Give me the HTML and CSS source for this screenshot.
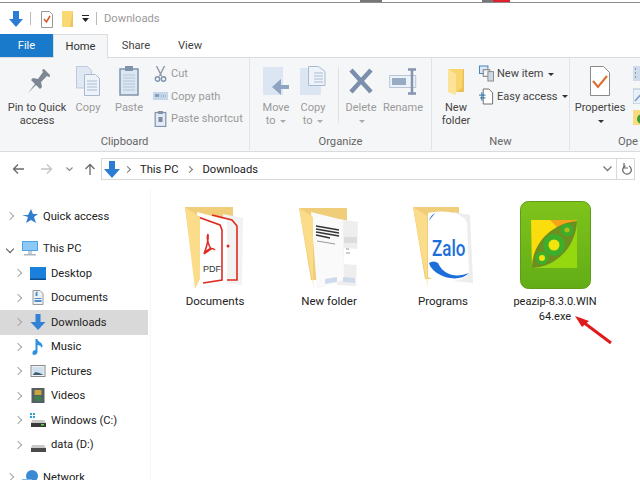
FILE: index.html
```html
<!DOCTYPE html>
<html lang="en">
<head>
    <meta charset="UTF-8">
    <title>Downloads</title>
    <link rel="stylesheet" href="styles.css">
</head>
<body>
    <div class="window">
        <!-- what is left of the window behind this one -->
        <div class="strip">
            <span class="strip-dark"></span>
            <span class="strip-gray"></span>
            <span class="strip-red"></span>
        </div>

        <!-- title bar -->
        <div class="titlebar">
            <svg width="16" height="18" viewBox="0 0 16 18"><path d="M5 1h6v8h4l-7 8-7-8h4z" fill="#2b7cd3"/></svg>
            <span class="qa-sep"></span>
            <svg class="qa-doc" width="12" height="18" viewBox="0 0 12 18"><path d="M.5 1.500h8l3 3v13H.5z" fill="#fff" stroke="#999"/><path d="M3 9l2.500 3L9 6" fill="none" stroke="#d8562a" stroke-width="1.500"/></svg>
            <svg class="qa-folder" width="12" height="18" viewBox="0 0 12 18"><path d="M0 1h11v16H0z" fill="#fad873"/><path d="M11 1v16H8z" fill="#eec45c"/></svg>
            <svg class="qa-drop" width="7" height="7" viewBox="0 0 7 7"><path d="M0 0h7v1H0zM0 3h7L3.500 7z" fill="#222"/></svg>
            <span class="qa-sep qa-sep2"></span>
            <span class="title-text">Downloads</span>
        </div>

        <!-- tabs -->
        <div class="tabs">
            <div class="tab tab-file">File</div>
            <div class="tab tab-home">Home</div>
            <div class="tab">Share</div>
            <div class="tab">View</div>
        </div>

        <!-- ribbon -->
        <div class="ribbon">
            <div class="group group-clipboard">
                <div class="group-body">
                    <div class="big-btn btn-pin">
                        <svg width="26" height="30" viewBox="0 0 26 30"><path d="M4 27l7-9-4-4 2-2 5 1 5-7-1-2 2-1 7 7-2 1-2-1-6 6 1 5-2 2-4-4z" fill="#7d8794"/></svg>
                        <span>Pin to Quick<br>access</span>
                    </div>
                    <div class="big-btn btn-copy off">
                        <svg width="24" height="30" viewBox="0 0 24 30"><path d="M.5.500h11l4 4V22H.5z" fill="#dfe8f3" stroke="#bccbdc"/><path d="M8.500 8.500h11l4 4v17h-15z" fill="#eef3f9" stroke="#a9bad0"/><path d="M11 15h10M11 18h10M11 21h10M11 24h10" stroke="#a9bad0"/></svg>
                        <span>Copy</span>
                    </div>
                    <div class="big-btn btn-paste off">
                        <svg width="20" height="30" viewBox="0 0 20 30"><rect x="1" y="3" width="18" height="26" fill="#dbe6f2" stroke="#7f93ab" stroke-width="1.500"/><rect x="6" y="0" width="8" height="5" fill="#7f93ab"/><path d="M4 9h12M4 12h12M4 15h12M4 18h12M4 21h12M4 24h12" stroke="#b4c5d8"/></svg>
                        <span>Paste</span>
                    </div>
                    <div class="small-col off">
                        <div class="small-btn">
                            <svg width="12" height="16" viewBox="0 0 12 16"><path d="M2 0l5 10M10 0L5 10" stroke="#8d98a7" stroke-width="1.400"/><circle cx="3" cy="13" r="2.200" fill="none" stroke="#7f93ab" stroke-width="1.400"/><circle cx="9" cy="13" r="2.200" fill="none" stroke="#7f93ab" stroke-width="1.400"/></svg>
                            <span>Cut</span>
                        </div>
                        <div class="small-btn">
                            <svg width="15" height="10" viewBox="0 0 15 10"><rect width="15" height="8" y="1" fill="#c6d6ea"/><path d="M2 3l1 3 1-3 1 3 1-3M8 5h1M10 5h1M12 5h1" stroke="#6e88a8" fill="none" stroke-width=".8"/></svg>
                            <span>Copy path</span>
                        </div>
                        <div class="small-btn">
                            <svg width="12" height="16" viewBox="0 0 12 16"><rect x=".7" y="1.500" width="10.600" height="14" fill="#e2ebf5" stroke="#7f93ab" stroke-width="1.200"/><rect x="3.500" width="5" height="3" fill="#7f93ab"/><path d="M4 6h4v5H4z" fill="#7f8b99"/></svg>
                            <span>Paste shortcut</span>
                        </div>
                    </div>
                </div>
                <div class="group-label">Clipboard</div>
            </div>

            <div class="group group-organize">
                <div class="group-body">
                    <div class="big-btn btn-move off">
                        <svg width="26" height="30" viewBox="0 0 26 30"><path d="M0 1h20v28H0z" fill="#dce6f2"/><path d="M26 19h-8v-6l-9 8 9 8v-6h8z" fill="#8fa4c0"/></svg>
                        <span>Move<br>to <i class="caret caret-off"></i></span>
                    </div>
                    <div class="big-btn btn-copyto off">
                        <svg width="26" height="30" viewBox="0 0 26 30"><path d="M0 2h21v27H0z" fill="#dce6f2"/><path d="M8.500.500h10l6.500 5v14H8.500z" fill="#eef3f9" stroke="#a9bad0"/><path d="M14 7h9M14 10h9M14 13h9M14 16h9" stroke="#a9bad0"/></svg>
                        <span>Copy<br>to <i class="caret caret-off"></i></span>
                    </div>
                    <span class="vline"></span>
                    <div class="big-btn btn-delete off">
                        <svg width="24" height="30" viewBox="0 0 24 30"><path d="M2 4l20 22M22 4L2 26" stroke="#7b8fac" stroke-width="4.500"/></svg>
                        <span>Delete<br><i class="caret caret-off"></i></span>
                    </div>
                    <div class="big-btn btn-rename off">
                        <svg width="28" height="30" viewBox="0 0 28 30"><rect x=".7" y="9.500" width="26" height="12" fill="#eef3f9" stroke="#b6c5d8"/><rect x="3" y="12" width="14" height="7" fill="#98abc4"/><path d="M19 3.500h8M23 3.500v24M19 27.500h8" stroke="#8294ae" stroke-width="2.500" fill="none"/></svg>
                        <span>Rename</span>
                    </div>
                </div>
                <div class="group-label">Organize</div>
            </div>

            <div class="group group-new">
                <div class="group-body">
                    <div class="big-btn btn-newfolder">
                        <svg width="18" height="30" viewBox="0 0 18 30"><path d="M1 3h16v22l-10 1z" fill="#f9d56e"/><path d="M1 3l8 5v21l-8-3z" fill="#fce398"/><path d="M16 3h1v23H9l6-4z" fill="#eac158"/></svg>
                        <span>New<br>folder</span>
                    </div>
                    <div class="small-col small-col-new">
                        <div class="small-btn">
                            <svg width="16" height="17" viewBox="0 0 16 17"><rect x=".5" y=".5" width="9" height="8" fill="#dbe8f6" stroke="#3f80b8"/><rect x="4.500" y="4.500" width="7" height="7" fill="#f2f5f9" stroke="#777"/><rect x="9.500" y="6.500" width="6" height="10" fill="#cdd8e4" stroke="#888"/></svg>
                            <span>New item <i class="caret"></i></span>
                        </div>
                        <div class="small-btn">
                            <svg width="16" height="17" viewBox="0 0 16 17"><path d="M4.500.500h6l4 4v12h-10z" fill="#fff" stroke="#666"/><path d="M0 7h7M1 10h6M3 4v9" stroke="#1e6fae" fill="none"/></svg>
                            <span>Easy access <i class="caret"></i></span>
                        </div>
                    </div>
                </div>
                <div class="group-label">New</div>
            </div>

            <div class="group group-open">
                <div class="group-body">
                    <div class="big-btn btn-props">
                        <svg width="20" height="30" viewBox="0 0 20 30"><path d="M.5.500h13l6 6v23H.5z" fill="#fff" stroke="#8a8a8a"/><path d="M3 15l5 6L17 10" fill="none" stroke="#dd6b2a" stroke-width="2"/></svg>
                        <span>Properties<br><i class="caret"></i></span>
                    </div>
                    <div class="open-icons">
                        <svg width="10" height="16" viewBox="0 0 10 16"><rect width="10" height="15" fill="#cfdcec"/><path d="M2 3h1M2 7h1M2 11h1" stroke="#555"/></svg>
                        <svg width="10" height="16" viewBox="0 0 10 16"><path d="M0 1h10v15H0z" fill="#e8f0f9" stroke="#b0c0d4"/><path d="M2 13L9 5" stroke="#7f9cc4" stroke-width="1.500"/></svg>
                        <svg width="10" height="15" viewBox="0 0 10 15"><rect width="10" height="15" fill="#f6dc7e"/><circle cx="9" cy="9" r="5" fill="#3f9e3a"/></svg>
                    </div>
                </div>
                <div class="group-label label-open">Ope</div>
            </div>
        </div>

        <!-- address bar -->
        <div class="navbar">
            <div class="nav-btns">
                <svg width="12" height="12" viewBox="0 0 12 12"><path d="M12 6H1.500M6 1.500L1.500 6 6 10.500" fill="none" stroke="#6a6a6a" stroke-width="1.300"/></svg>
                <svg class="nav-fwd" width="12" height="12" viewBox="0 0 12 12"><path d="M0 6h10.500M6 1.500L10.500 6 6 10.500" fill="none" stroke="#c4c4c4" stroke-width="1.300"/></svg>
                <svg class="nav-drop" width="7" height="5" viewBox="0 0 7 5"><path d="M.5.500L3.500 3.500 6.500.500" fill="none" stroke="#8a8a8a" stroke-width="1.200"/></svg>
                <svg class="nav-up" width="12" height="12" viewBox="0 0 12 12"><path d="M6 12V1.500M1.500 6L6 1.500 10.500 6" fill="none" stroke="#6a6a6a" stroke-width="1.300"/></svg>
            </div>
            <div class="address">
                <svg width="16" height="17" viewBox="0 0 16 17"><path d="M5 0h6v8h5l-8 9-8-9h5z" fill="#2b7cd3"/></svg>
                <span class="crumb-sep"></span>
                <span class="crumb">This PC</span>
                <span class="crumb-sep crumb-sep2"></span>
                <span class="crumb">Downloads</span>
                <svg class="addr-drop" width="9" height="6" viewBox="0 0 9 6"><path d="M.5.500l4 4 4-4" fill="none" stroke="#777" stroke-width="1.300"/></svg>
                <span class="addr-refresh">
                    <svg width="10" height="13" viewBox="0 0 10 13"><path d="M3.500 2.800A4.300 4.300 0 1 0 7 3" fill="none" stroke="#666" stroke-width="1.200"/><path d="M2 0v5h4" fill="none" stroke="#666" stroke-width="1.200"/></svg>
                </span>
            </div>
        </div>

        <!-- content -->
        <div class="main">
            <div class="tree">
                <div class="tree-item top"><i class="chev"></i>
                    <svg width="16" height="15" viewBox="0 0 16 15"><path d="M9 0l2 5h5l-4 3 2 6-5-3-5 3 2-6-6-2h6z" fill="#2f7ed0"/></svg>
                    <span>Quick access</span></div>
                <div class="tree-item top gap-pc"><i class="chev open"></i>
                    <svg width="16" height="15" viewBox="0 0 16 15"><rect width="16" height="10" fill="#4da3e6"/><rect x="1" y="1" width="14" height="8" fill="#8ccaf5"/><path d="M2 13h12v1.500H2z" fill="#a8b4bf"/><path d="M6 10h4v3H6z" fill="#c5ced6"/></svg>
                    <span>This PC</span></div>
                <div class="tree-item"><i class="chev"></i>
                    <svg width="16" height="13" viewBox="0 0 16 13"><rect width="16" height="13" fill="#1b7fdc"/><rect y="11.500" width="16" height="1.500" fill="#0b4d8e"/></svg>
                    <span>Desktop</span></div>
                <div class="tree-item"><i class="chev"></i>
                    <svg width="15" height="15" viewBox="0 0 15 15"><path d="M2.500.500h7l3 3v11h-10z" fill="#eef1f4" stroke="#9a9a9a"/><path d="M5 3l2-2v5H5zM4 8h7v1H4zM4 10h7v2H4z" fill="#4a8fd0"/></svg>
                    <span>Documents</span></div>
                <div class="tree-item selected"><i class="chev"></i>
                    <svg width="15" height="16" viewBox="0 0 15 16"><path d="M5 0h5v8h5l-7.500 8L0 8h5z" fill="#2f82d6"/></svg>
                    <span>Downloads</span></div>
                <div class="tree-item"><i class="chev"></i>
                    <svg width="15" height="16" viewBox="0 0 15 16"><path d="M5 0h2c0 3 5 3 5 7 0 1-1 2-1 2 0-2-2-3-4-3v7c0 2-2 3-3.500 3S2 15 2 13.500 3.500 11 5 11z" fill="#2f90e0"/></svg>
                    <span>Music</span></div>
                <div class="tree-item"><i class="chev"></i>
                    <svg width="15" height="12" viewBox="0 0 15 12"><rect x=".5" y=".5" width="14" height="11" fill="#f0f3f6" stroke="#8a8a8a"/><rect x="2" y="2" width="11" height="8" fill="#cfe0ee"/><path d="M2 10l3-3 4 1 4 2z" fill="#3f5f70"/></svg>
                    <span>Pictures</span></div>
                <div class="tree-item"><i class="chev"></i>
                    <svg width="13" height="15" viewBox="0 0 13 15"><rect width="13" height="15" fill="#555e66"/><rect x="3" y="2" width="7" height="5" fill="#c9a53a"/><rect x="3" y="8" width="7" height="5" fill="#3f7f4a"/></svg>
                    <span>Videos</span></div>
                <div class="tree-item"><i class="chev"></i>
                    <svg width="16" height="14" viewBox="0 0 16 14"><path d="M0 0h2v2H0zM3 0h2v2H3zM0 3h2v2H0zM3 3h2v2H3z" fill="#2fa0d8"/><path d="M2 7h12l2 3v4H1v-4z" fill="#c9c9c9"/><rect x="1" y="10" width="15" height="4" fill="#3a3a3a"/><rect x="11" y="11" width="3" height="1.500" fill="#6fce4a"/></svg>
                    <span>Windows (C:)</span></div>
                <div class="tree-item"><i class="chev"></i>
                    <svg width="16" height="14" viewBox="0 0 16 14"><path d="M2 7h12l2 3v4H1v-4z" fill="#c9c9c9"/><rect x="1" y="10" width="15" height="4" fill="#4a4a4a"/></svg>
                    <span>data (D:)</span></div>
                <div class="tree-item top gap-net"><i class="chev"></i>
                    <svg width="16" height="15" viewBox="0 0 16 15"><circle cx="10" cy="6" r="6" fill="#3b8bd4"/><rect y="9" width="10" height="5" fill="#7fb5e0"/></svg>
                    <span>Network</span></div>
            </div>

            <div class="files">
                <div class="file">
                    <div class="thumb">
                        <svg width="60" height="88" viewBox="0 0 60 88">
                            <path d="M0 6h48v72H10z" fill="#f0cd78"/>
                            <path d="M38 13l20 4-1 67-19-2z" fill="#f2f2f2"/>
                            <path d="M12 11l30 8v69L15 84z" fill="#fff"/>
                            <path d="M27 14l20 5 5 6v54H42" fill="none" stroke="#e02a20" stroke-width="1.600"/>
                            <path d="M13 16l22 8 2 5v50l-19 3" fill="none" stroke="#e02a20" stroke-width="1.600"/>
                            <path d="M23 33c-2 4 1 12 3 15l-7 5c3-5 8-7 11-4M23 33c1 6-1 12-4 20" fill="none" stroke="#e02a20" stroke-width="1.500"/>
                            <circle cx="43" cy="45" r="1.500" fill="#e02a20"/>
                            <path d="M0 6l15 10v62l-5 10z" fill="#fbdc8a"/>
                            <text x="18" y="71" class="pdf-text">PDF</text>
                        </svg>
                    </div>
                    <div class="file-name">Documents</div>
                </div>
                <div class="file">
                    <div class="thumb">
                        <svg width="60" height="88" viewBox="0 0 60 88">
                            <path d="M0 7h48v72H12z" fill="#f0cd78"/>
                            <path d="M40 18l19 3-2 64-19-1z" fill="#eeeeee"/>
                            <path d="M12 11l32 8 1 60-27 9z" fill="#fafafa"/>
                            <path d="M45 47l13 1v16l-13-1z" fill="#fff"/>
                            <path d="M45 36h13v6H45z" fill="#dcdcdc"/>
                            <path d="M17 25l23 4M17 28l23 4M17 31l23 4M17 34l14 3" stroke="#333" stroke-width="1.300"/>
                            <path d="M18 40l18 3M47 48h3M47 52h4" stroke="#999"/>
                            <path d="M26 78l12-2v5l-12 2zM44 76l12 1v5l-12-1z" fill="#cfdbea"/>
                            <path d="M0 7l14 9v62l1 10z" fill="#fbdc8a"/>
                        </svg>
                    </div>
                    <div class="file-name">New folder</div>
                </div>
                <div class="file">
                    <div class="thumb">
                        <svg width="60" height="88" viewBox="0 0 60 88">
                            <path d="M0 6h46v72H12z" fill="#f0cd78"/>
                            <path d="M40 11l17 3 3 68-20-2z" fill="#ededed"/>
                            <path d="M15 12c18-4 36 0 39 10l2 50c-2 8-28 12-41 4z" fill="#fff"/>
                            <path d="M16 62c3 12 28 22 40 10-12 5-25 3-31-10-3-2-6-2-9 0z" fill="#1c6fd8"/>
                            <path d="M16 20c1-4 3-6 6-8-3 4-5 6-6 8z" fill="#1c6fd8"/>
                            <text class="zalo-text" transform="translate(19 55) scale(1 1.300)">Zalo</text>
                            <path d="M0 6l14 9v62l1 11z" fill="#fbdc8a"/>
                        </svg>
                    </div>
                    <div class="file-name">Programs</div>
                </div>
                <div class="file file-exe">
                    <div class="thumb">
                        <svg width="71" height="88" viewBox="0 0 71 88">
                            <defs>
                                <linearGradient id="peaBody" x1="0" y1="0" x2="0" y2="1">
                                    <stop offset="0" stop-color="#7fc31b"/>
                                    <stop offset="1" stop-color="#62ad17"/>
                                </linearGradient>
                            </defs>
                            <rect x=".5" y=".5" width="70" height="87" rx="8" fill="url(#peaBody)" stroke="#5c9e18"/>
                            <path d="M11 19h46L12 67z" fill="#fbdc0c"/>
                            <path d="M30 19h27L40 29z" fill="#f7a21b"/>
                            <path d="M57 19v48H12z" fill="#96d80f"/>
                            <path d="M57 20C34 22 12 40 12 67 36 66 56 46 57 20z" fill="#6d8f1f"/>
                            <circle cx="34" cy="44" r="11" fill="#3cae2a"/>
                            <circle cx="34" cy="44" r="5.500" fill="#f2e40c"/>
                            <circle cx="22" cy="57" r="6.500" fill="#3cae2a"/>
                            <circle cx="22" cy="57" r="3" fill="#f2e40c"/>
                            <circle cx="47" cy="29" r="6.500" fill="#3cae2a"/>
                            <circle cx="47" cy="29" r="2.500" fill="#b5bb1a"/>
                        </svg>
                    </div>
                    <div class="file-name">peazip-8.3.0.WIN<br>64.exe</div>
                    <svg class="arrow-mark" width="38" height="32" viewBox="0 0 38 32"><path d="M37 29L9 8" stroke="#e01b1b" stroke-width="3"/><path d="M1 2l14 5-7 6z" fill="#e01b1b"/></svg>
                </div>
            </div>
        </div>
    </div>
</body>
</html>
```

FILE: styles.css
```css
html, body {
    margin: 0;
    height: 100%;
    overflow: hidden;
}

body {
    font-family: 'Roboto', 'Liberation Sans', sans-serif;
    font-size: 11.200px;
    color: #333;
    background: #fff;
}

.window {
    width: 640px;
    height: 480px;
    overflow: hidden;
    display: flex;
    flex-direction: column;
}

.strip {
    position: relative;
    height: 3px;
    flex: none;
    border-bottom: 1px solid #8c8c8c;
    box-sizing: border-box;
}

.strip span {
    position: absolute;
    top: 0;
    height: 2px;
}

.strip-dark { left: 360px; width: 22px; top: 1px; background: #777; }
.strip-gray { left: 482px; width: 11px; background: #777; }
.strip-red { left: 493px; width: 17px; background: #e0202c; }

.titlebar {
    height: 31px;
    flex: none;
    display: flex;
    align-items: center;
    padding-left: 8px;
    box-sizing: border-box;
}

.qa-sep {
    width: 1px;
    height: 13px;
    margin-left: 6px;
    background: #bbb;
}

.qa-doc { margin-left: 10px; }
.qa-folder { margin-left: 9px; }
.qa-drop { margin-left: 8px; }
.qa-sep2 { margin-left: 7px; }

.title-text {
    margin-left: 7px;
    color: #999;
}

.tabs {
    height: 24px;
    flex: none;
    display: flex;
    border-bottom: 1px solid #dcdcdc;
    box-sizing: border-box;
}

.tab {
    width: 54px;
    margin-left: 1px;
    text-align: center;
    line-height: 24px;
    color: #444;
}

.tab-file {
    width: 53px;
    margin-left: 0;
    background: #1979ca;
    color: #fff;
}

.tab-home {
    width: 55px;
    margin-left: 0;
    height: 24px;
    background: #f5f6f7;
    border: 1px solid #dcdcdc;
    border-bottom: 0;
    box-sizing: border-box;
    color: #333;
    line-height: 23px;
}

.tab-home + .tab {
    margin-left: 1px;
}

.tab-home + .tab + .tab {
    margin-left: 0;
}

.ribbon {
    height: 94px;
    flex: none;
    display: flex;
    background: #f5f6f7;
    border-bottom: 1px solid #dadbdc;
    box-sizing: border-box;
}

.group {
    display: flex;
    flex-direction: column;
    border-right: 1px solid #e2e3e4;
    box-sizing: border-box;
    height: 92px;
    flex: none;
}

.group-clipboard { width: 250px; }
.group-organize { width: 182px; }
.group-new { width: 138px; }
.group-open { width: 70px; border-right: 0; }

.group-body {
    flex: 1;
    display: flex;
}

.group-label {
    height: 17px;
    margin-top: 3px;
    text-align: center;
    font-size: 11.200px;
    line-height: 18px;
    color: #666;
}

.label-open {
    padding-left: 48px;
    text-align: left;
}

.big-btn {
    display: flex;
    flex-direction: column;
    align-items: center;
    font-size: 11px;
    line-height: 13px;
    text-align: center;
    flex: none;
    color: #444;
}

.big-btn svg {
    margin: 8px 0 5px;
}

.big-btn span {
    display: block;
}

.off,
.big-btn.off {
    color: #9a9a9a;
}

.btn-pin { width: 66px; margin-left: 4px; }
.btn-copy { width: 36px; }
.btn-paste { width: 36px; margin-left: 5px; }
.btn-move { width: 36px; margin-left: 8px; }
.btn-copyto { width: 36px; margin-left: 1px; }
.btn-delete { width: 40px; margin-left: 2px; }
.btn-rename { width: 44px; }
.btn-newfolder { width: 40px; margin-left: 4px; }
.btn-props { width: 54px; margin-left: 3px; }

.vline {
    width: 1px;
    height: 56px;
    margin: 9px 0 0 7px;
    background: #e0e1e2;
    flex: none;
}

.small-col {
    display: flex;
    flex-direction: column;
    gap: 3.500px;
    padding: 6px 0 0 6px;
}

.small-col-new {
    padding-left: 3px;
    color: #444;
}

.small-btn {
    display: flex;
    align-items: center;
    gap: 3px;
    height: 19px;
    font-size: 11px;
    white-space: nowrap;
}

.small-btn svg {
    width: 15px;
    flex: none;
}

.caret {
    display: inline-block;
    width: 0;
    height: 0;
    margin-left: 2px;
    vertical-align: middle;
    border-left: 3px solid transparent;
    border-right: 3px solid transparent;
    border-top: 3px solid #333;
}

.caret-off {
    border-top-color: #aaa;
}

.open-icons {
    display: flex;
    flex-direction: column;
    gap: 6px;
    padding: 8px 0 0 6px;
}

.navbar {
    height: 37px;
    flex: none;
    display: flex;
    align-items: flex-start;
    padding-top: 6px;
    box-sizing: border-box;
}

.nav-btns {
    width: 101px;
    height: 22px;
    padding-left: 12px;
    box-sizing: border-box;
    display: flex;
    align-items: center;
}

.nav-fwd { margin-left: 17px; }
.nav-drop { margin-left: 13px; }
.nav-up { margin-left: 11px; }

.address {
    width: 534px;
    height: 22px;
    border: 1px solid #d9d9d9;
    box-sizing: border-box;
    display: flex;
    align-items: center;
    padding-left: 2px;
    color: #222;
}

.crumb-sep {
    width: 4px;
    height: 4px;
    margin: 0 10px 0 5px;
    border-top: 1px solid #777;
    border-right: 1px solid #777;
    transform: rotate(45deg);
}

.crumb-sep2 {
    margin-left: 9px;
}

.addr-drop {
    margin-left: auto;
    margin-right: 4px;
}

.addr-refresh {
    width: 15px;
    height: 20px;
    border-left: 1px solid #d9d9d9;
    display: flex;
    align-items: center;
    justify-content: center;
    padding-left: 2px;
}

.main {
    flex: 1;
    display: flex;
    min-height: 0;
}

.tree {
    width: 150px;
    flex: none;
    padding-top: 15px;
    border-right: 1px solid #f6f6f6;
    color: #222;
}

.tree-item {
    height: 24.500px;
    display: flex;
    align-items: center;
    padding-left: 15px;
    gap: 5px;
}

.tree-item.top {
    padding-left: 7px;
}

.tree-item.gap-pc { margin-top: 8px; }
.tree-item.gap-net { margin-top: 8px; }

.tree-item.selected {
    margin-right: 2px;
    background: #d9d9d9;
}

.chev {
    width: 5px;
    height: 5px;
    margin-right: 4px;
    flex: none;
    border-top: 1.500px solid #a6a6a6;
    border-right: 1.500px solid #a6a6a6;
    transform: rotate(45deg);
}

.chev.open {
    transform: rotate(135deg);
    border-color: #555;
}

.tree-item svg {
    width: 16px;
    flex: none;
}

.files {
    flex: 1;
    display: flex;
    padding-top: 12px;
}

.file {
    position: relative;
    width: 114px;
    flex: none;
    display: flex;
    flex-direction: column;
    align-items: center;
    text-align: center;
    color: #222;
    font-size: 11.500px;
}

.file:first-child {
    margin-left: 7px;
}

.thumb {
    height: 88px;
    display: flex;
    align-items: flex-start;
}

.file-name {
    line-height: 15px;
    margin-top: 5px;
}

.file-exe {
    width: 110px;
    font-size: 11px;
}

.pdf-text {
    font-family: 'Liberation Sans Narrow', 'Liberation Sans', sans-serif;
    font-size: 9px;
    fill: #333;
}

.zalo-text {
    font-family: 'Roboto', sans-serif;
    font-weight: 500;
    font-size: 17px;
    fill: #1c6fd8;
}

/* red pointer lying over the file label */
.arrow-mark {
    position: absolute;
    left: 74px;
    top: 113px;
}
```
